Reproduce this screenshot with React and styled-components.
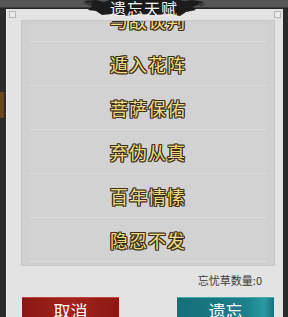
import React from 'react';
import styled, { createGlobalStyle } from 'styled-components';

const GlobalStyle = createGlobalStyle`
  html, body {
    margin: 0;
    padding: 0;
    background: #2b2b2b;
  }
  body {
    font-family: "Noto Sans CJK SC", "Noto Sans", sans-serif;
  }
`;

const talents = ['与敌谈判', '遁入花阵', '菩萨保佑', '弃伪从真', '百年情愫', '隐忍不发'];

const App = () => (
  <>
    <GlobalStyle />
    <Screen>
      <SideDeco />
      <Panel>
        <Corner side="left" />
        <Corner side="right" />
        <ListViewport>
          <ListScroll>
            {talents.map((name) => (
              <TalentRow key={name}>
                <TalentName>{name}</TalentName>
              </TalentRow>
            ))}
          </ListScroll>
        </ListViewport>
        <CountLine>忘忧草数量:0</CountLine>
        <ButtonRow>
          <ActionButton tone="red">取消</ActionButton>
          <ActionButton tone="teal">遗忘</ActionButton>
        </ButtonRow>
      </Panel>
      <TitleBanner>
        <svg width="124" height="20" viewBox="0 0 124 20">
          <path
            d="M2 3 L14 2 L22 4 L30 1 L62 0 L94 1 L102 3 L110 2 L122 4 L116 7 L110 9 L114 12 L104 14 L98 18 L88 16 L72 17 L58 16 L42 18 L30 16 L20 17 L14 13 L6 12 L10 8 Z"
            fill="#1c1c1c"
          />
          <path d="M0 5 L10 4 L8 8 Z" fill="#3a3a3a" />
          <path d="M116 5 L124 6 L118 9 Z" fill="#3a3a3a" />
        </svg>
        <TitleText>遗忘天赋</TitleText>
      </TitleBanner>
    </Screen>
  </>
);

export default App;

const Screen = styled.div`
  position: relative;
  width: 288px;
  height: 317px;
  overflow: hidden;
  box-sizing: border-box;
  padding: 9px 5px 0 6px;
  background: linear-gradient(#565656 0, #565656 7px, #1e1e1e 8px, #2b2b2b 9px);
`;

const SideDeco = styled.div`
  position: absolute;
  left: 0;
  top: 92px;
  width: 4px;
  height: 26px;
  background: #6a4520;
`;

const Panel = styled.div`
  position: relative;
  height: 320px;
  box-sizing: border-box;
  padding: 11px 8px 0 14px;
  background: #e3e3e3;
  border-left: 1px solid #f0f0f0;
  display: flex;
  flex-direction: column;
`;

const Corner = styled.div`
  position: absolute;
  top: 2px;
  ${(p) => (p.side === 'left' ? 'left: 2px;' : 'right: 2px;')}
  width: 5px;
  height: 5px;
  border: 1px solid #b8b8b8;
  background: #ececec;
`;

const ListViewport = styled.div`
  height: 250px;
  overflow: hidden;
  background: #d0d0d0;
  border: 1px solid #c8c8c8;
  box-sizing: border-box;
  padding: 0 7px;
`;

const ListScroll = styled.div`
  margin-top: -23px;
`;

const TalentRow = styled.div`
  height: 43px;
  border-bottom: 1px solid #dcdcdc;
  display: flex;
  align-items: center;
  justify-content: center;
  background: #d2d2d2;
`;

const TalentName = styled.span`
  font-size: 18px;
  font-weight: 400;
  color: #efdc86;
  letter-spacing: 1px;
  text-shadow:
    1px 0 0 #3a2e14, -1px 0 0 #3a2e14, 0 1px 0 #3a2e14, 0 -1px 0 #3a2e14,
    1px 1px 0 #3a2e14, -1px -1px 0 #3a2e14, 1px -1px 0 #3a2e14, -1px 1px 0 #3a2e14;
`;

const CountLine = styled.div`
  margin-top: 6px;
  padding-right: 13px;
  text-align: right;
  font-size: 11px;
  line-height: 16px;
  color: #3a3a3a;
`;

const ButtonRow = styled.div`
  margin-top: 9px;
  padding-right: 1px;
  display: flex;
  justify-content: space-between;
  margin-left: 1px;
`;

const ActionButton = styled.div`
  width: 97px;
  height: 32px;
  box-sizing: border-box;
  padding-top: 3px;
  text-align: center;
  font-size: 17px;
  line-height: 20px;
  color: #ffffff;
  border-top: 1px solid ${(p) => (p.tone === 'red' ? '#c0463c' : '#4aa9b2')};
  background: ${(p) =>
    p.tone === 'red'
      ? 'linear-gradient(90deg, #8a1712, #a3241d 50%, #8c1813)'
      : 'linear-gradient(90deg, #156f79, #1b7f89 70%, #2a9aa4 90%, #17707a)'};
`;

const TitleBanner = styled.div`
  position: absolute;
  left: 82px;
  top: -2px;
  width: 124px;
  height: 20px;
  display: flex;
  align-items: center;
  justify-content: center;

  svg {
    position: absolute;
    left: 0;
    top: 0;
  }
`;

const TitleText = styled.span`
  position: relative;
  font-size: 16px;
  line-height: 18px;
  color: #f4f4f4;
  letter-spacing: 1px;
  margin-top: -1px;
`;
